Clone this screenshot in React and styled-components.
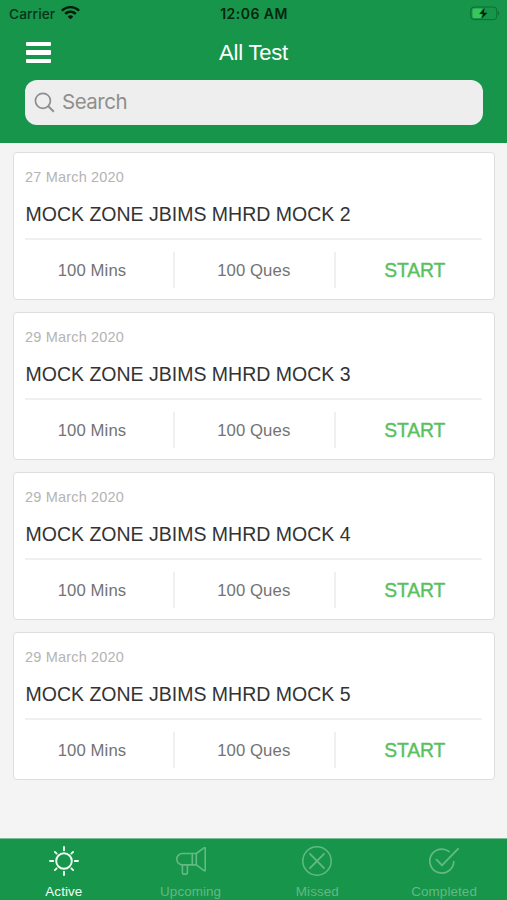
import React from 'react';
import styled, { createGlobalStyle } from 'styled-components';

const GlobalStyle = createGlobalStyle`
  * { box-sizing: border-box; }
  body { margin: 0; background: #f4f4f4; }
`;

const Screen = styled.div`
  width: 507px;
  height: 900px;
  display: flex;
  flex-direction: column;
  overflow: hidden;
  background: #f4f4f4;
  font-family: "Liberation Sans", Arial, sans-serif;
`;

const Header = styled.header`
  height: 142.5px;
  flex: none;
  background: #17954a;
`;

const StatusBar = styled.div`
  height: 28px;
  padding: 0 7px 0 9px;
  display: grid;
  grid-template-columns: 1fr auto 1fr;
  align-items: center;
  font: 500 14px/28px Inter, sans-serif;
  color: #06331a;
`;

const Carrier = styled.div`
  display: flex;
  align-items: center;
  gap: 5.5px;
  font-weight: 500;
  font-size: 13.7px;
  letter-spacing: 0.1px;
  svg { display: block; margin-top: -2px; }
`;

const Clock = styled.div`
  font-weight: 600;
  font-size: 14px;
  letter-spacing: 0.45px;
  margin-right: 1px;
  color: #05260f;
`;

const Battery = styled.svg`
  display: block;
  justify-self: end;
  margin-top: -2px;
`;

const NavBar = styled.div`
  height: 52px;
  padding: 0 26px;
  display: grid;
  grid-template-columns: 1fr auto 1fr;
  align-items: center;
`;

const MenuButton = styled.button`
  width: 25px;
  padding: 0;
  border: 0;
  background: none;
  display: flex;
  flex-direction: column;
  gap: 4px;
  margin-top: -3px;
`;

const MenuLine = styled.span`
  height: 4.3px;
  width: 25px;
  border-radius: 1px;
  background: #fff;
`;

const Title = styled.h1`
  margin: -2px 0 0;
  font-size: 22px;
  font-weight: 400;
  letter-spacing: -0.2px;
  color: #fff;
`;

const SearchField = styled.div`
  height: 44.5px;
  margin: 0 24.5px 0 25px;
  padding: 0 9px;
  display: flex;
  align-items: center;
  gap: 7px;
  border-radius: 12px;
  background: #eee;
  font: 400 20.5px/44px Inter, sans-serif;
  letter-spacing: -0.5px;
  color: #8e8e8e;
  svg { display: block; }
`;

const List = styled.main`
  flex: 1;
  padding: 9.5px 12.5px 0;
  display: flex;
  flex-direction: column;
  gap: 12px;
`;

const Card = styled.article`
  height: 148px;
  flex: none;
  padding: 0 11.5px;
  border: 1.4px solid #dedede;
  border-radius: 4px;
  background: #fff;
`;

const DateText = styled.div`
  padding-top: 15px;
  font-size: 14.5px;
  line-height: 18px;
  letter-spacing: 0.18px;
  color: #b4b4b4;
`;

const TestName = styled.h2`
  margin: 0;
  height: 54px;
  padding: 16px 0 0 0.5px;
  font-size: 19.5px;
  font-weight: 400;
  line-height: 24px;
  white-space: nowrap;
  color: #333;
  border-bottom: 2px solid #f0f0f0;
`;

const Facts = styled.div`
  height: 60px;
  display: grid;
  grid-template-columns: 149.5px 161px 1fr;
  align-items: center;
`;

const Fact = styled.div`
  height: 36px;
  line-height: 38px;
  padding-right: ${(p) => (p.$first ? '13.5px' : '0.5px')};
  text-align: center;
  font-size: 16.7px;
  letter-spacing: 0.1px;
  color: #737373;
  border-right: 2px solid #f0f0f0;
`;

const StartButton = styled.button`
  height: 36px;
  padding: 2px 0 0 12px;
  border: 0;
  background: none;
  font: 400 19.3px/34px "Liberation Sans", Arial, sans-serif;
  -webkit-text-stroke: 0.4px #5abf5e;
  letter-spacing: -0.1px;
  color: #5abf5e;
`;

const TabBar = styled.nav`
  height: 62px;
  flex: none;
  display: grid;
  grid-template-columns: repeat(4, 1fr);
  border-top: 1px solid #79bd94;
  background: #17954a;
`;

const Tab = styled.button`
  padding: 6.5px 0 0 1px;
  border: 0;
  background: none;
  display: flex;
  flex-direction: column;
  align-items: center;
  justify-content: flex-start;
  gap: 8px;
  font: 400 13.4px/16px "Liberation Sans", Arial, sans-serif;
  letter-spacing: 0.1px;
  color: ${(p) => (p.$active ? '#effff3' : '#63b985')};
  svg { display: block; }
`;

const WifiIcon = () => (
  <svg width="19" height="14" viewBox="0 0 19 14" fill="#001b09">
    <path d="M9.500 0C6 0 2.800 1.300.4 3.500c-.2.2-.2.5 0 .7l1 1c.2.2.5.2.7 0 2-1.800 4.600-2.900 7.400-2.900s5.400 1.100 7.400 2.900c.2.2.5.2.7 0l1-1c.2-.2.2-.5 0-.7C16.200 1.300 13 0 9.500 0z" />
    <path d="M9.500 4.600c-2.200 0-4.200.8-5.800 2.200-.2.2-.2.5 0 .7l1 1c.2.2.5.2.7 0 1.100-1 2.500-1.600 4.100-1.600s3 .6 4.100 1.600c.2.2.5.2.7 0l1-1c.2-.2.2-.5 0-.7-1.600-1.400-3.600-2.200-5.800-2.200z" />
    <path d="M9.500 9.200c-1 0-1.900.4-2.500 1-.2.2-.2.5 0 .7l2.100 2.100c.2.2.5.2.7 0l2.100-2.100c.2-.2.2-.5 0-.7-.6-.6-1.400-1-2.400-1z" />
  </svg>
);

const BatteryIcon = () => (
  <Battery width="30" height="15" viewBox="0 0 30 15">
    <rect x="0.8" y="1" width="26" height="12.600" rx="3.300" fill="none" stroke="#0f6c34" />
    <path d="M4 2.600h8.500L9 8.200h3l-1.500 3.800H4A1.500 1.500 0 0 1 2.500 10.500v-6.400A1.500 1.500 0 0 1 4 2.600z" fill="#38c75b" />
    <path d="M28 5.200v4.200c1.600-.7 1.600-3.500 0-4.200z" fill="#0f6c34" />
    <path d="M14.800 1.900 9.400 8h3.700l-1.600 4.800L17.300 6.700h-3.600z" fill="#001b09" />
  </Battery>
);

const SearchIcon = () => (
  <svg width="21" height="21" viewBox="0 0 21 21" fill="none" stroke="#8e8e8e" strokeWidth="1.700">
    <circle cx="8.900" cy="8.800" r="7.500" />
    <path d="m14.100 14 5.700 5.700" strokeWidth="2" />
  </svg>
);

const SunIcon = () => (
  <svg width="30" height="30" viewBox="0 0 30 30" fill="none" stroke="currentColor" strokeWidth="1.900" strokeLinecap="round">
    <circle cx="15" cy="15" r="7.800" />
    <path d="M15 1v3.200M15 25.800V29M1 15h3.200M25.800 15H29M5.900 5.900l1.700 1.700M22.400 22.400l1.700 1.700M5.900 24.100l1.700-1.700M22.400 7.600l1.700-1.700" />
  </svg>
);

const MegaphoneIcon = () => (
  <svg width="30" height="30" viewBox="0 0 30 30" fill="none" stroke="currentColor" strokeWidth="1.600" strokeLinejoin="round">
    <path d="M20.300 7.500H6.500a5.700 5.700 0 0 0 0 11.400h13.800z" />
    <path d="M16.300 7.500v11.400M20.300 7.500l7.700-5.700h1.200v22.900H28l-7.700-5.800M6.400 18.900v7.800c0 .9.500 1.400 1.400 1.400h2.200c.9 0 1.400-.5 1.400-1.400v-7.800" />
  </svg>
);

const MissedIcon = () => (
  <svg width="30" height="30" viewBox="0 0 30 30" fill="none" stroke="currentColor" strokeWidth="1.500" strokeLinecap="round">
    <circle cx="15" cy="15" r="14.200" />
    <path d="m8 7.800 14 14.400M22 7.800 8 22.200" strokeWidth="1.800" />
  </svg>
);

const CompletedIcon = () => (
  <svg width="30" height="30" viewBox="0 0 30 30" fill="none" stroke="currentColor" strokeWidth="1.700" strokeLinecap="round" strokeLinejoin="round">
    <path d="M20.200 5.600A12 12 0 1 0 24.800 15.700" />
    <path d="m7.500 13.700 5.500 5.600L29 2.800" strokeWidth="1.900" />
  </svg>
);

const tests = [
  { date: '27 March 2020', name: 'MOCK ZONE JBIMS MHRD MOCK 2' },
  { date: '29 March 2020', name: 'MOCK ZONE JBIMS MHRD MOCK 3' },
  { date: '29 March 2020', name: 'MOCK ZONE JBIMS MHRD MOCK 4' },
  { date: '29 March 2020', name: 'MOCK ZONE JBIMS MHRD MOCK 5' },
];

const tabs = [
  { label: 'Active', Icon: SunIcon, active: true },
  { label: 'Upcoming', Icon: MegaphoneIcon },
  { label: 'Missed', Icon: MissedIcon },
  { label: 'Completed', Icon: CompletedIcon },
];

export default function App() {
  return (
    <>
      <GlobalStyle />
      <Screen>
        <Header>
          <StatusBar>
            <Carrier>Carrier <WifiIcon /></Carrier>
            <Clock>12:06 AM</Clock>
            <BatteryIcon />
          </StatusBar>
          <NavBar>
            <MenuButton aria-label="Menu"><MenuLine /><MenuLine /><MenuLine /></MenuButton>
            <Title>All Test</Title>
          </NavBar>
          <SearchField><SearchIcon /><span>Search</span></SearchField>
        </Header>
        <List>
          {tests.map((t) => (
            <Card key={t.name}>
              <DateText>{t.date}</DateText>
              <TestName>{t.name}</TestName>
              <Facts>
                <Fact $first>100 Mins</Fact>
                <Fact>100 Ques</Fact>
                <StartButton>START</StartButton>
              </Facts>
            </Card>
          ))}
        </List>
        <TabBar>
          {tabs.map(({ label, Icon, active }) => (
            <Tab key={label} $active={active}><Icon />{label}</Tab>
          ))}
        </TabBar>
      </Screen>
    </>
  );
}
